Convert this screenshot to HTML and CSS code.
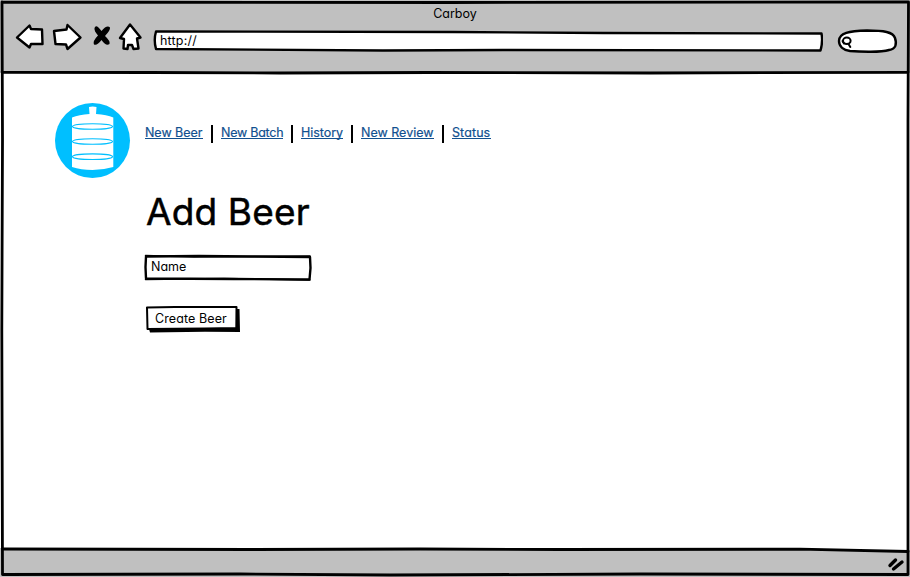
FILE: index.html
```html
<!DOCTYPE html>
<html lang="en">
<head>
<meta charset="utf-8">
<title>Carboy</title>
<link rel="stylesheet" href="styles.css">
</head>
<body>
<div class="window">
  <header class="chrome">
    <div class="title"><span>Carboy</span></div>
    <div class="toolbar">
      <svg class="controls" width="130" height="32" viewBox="14 22 130 32">
        <g class="ink paper">
          <path d="M17 37.5L29.5 25.5L31 29L42 29.5L42.500 44L31 44L29.500 47.500Z"/>
          <path d="M54 31L66.500 29.500L67.500 25L80.500 37.500L67.500 49L66 44.500L55.500 44Z"/>
          <path d="M130 24.500L140.500 37.500L137 38.500L138.500 48.500L133.500 49L132 45L128 45L127.500 49L123.500 48.500L124 39L120 38Z"/>
        </g>
        <path class="solid" d="M94.500 28Q96 23.500 101.500 31Q107 24.500 110 27.500Q110.500 30 105 36Q110.500 41 109.500 44Q106 46.500 101.500 40Q97 46 94 44.500Q92.500 41 98 35.500Q94 31 94.500 28Z"/>
      </svg>
      <div class="address">
        <svg class="sketch" viewBox="0 0 670 22"><path class="ink paper" d="M3 1.500L300 2L450 3L668.500 3.500Q670 12 667.500 20.500L350 20L230 20.500L3 19Q.5 10 3 1.500Z"/></svg>
        <span>http://</span>
      </div>
      <div class="search">
        <svg width="62" height="26" viewBox="836 28 62 26"><path class="ink paper" d="M839 41C839 33 849 31 867 30.500C884 30.500 893 32 895 38C897 44 896 49 889 50C881 52.500 861 52 850 51C843 50 839 46 839 41Z"/><ellipse class="ink thin" cx="846.800" cy="40.800" rx="3.800" ry="3.200"/><path class="ink thin" d="M842.500 41L844 43.500M848.500 44L850.300 47"/></svg>
      </div>
    </div>
  </header>
  <main class="page">
    <svg class="logo" width="76" height="76" viewBox="55 103 76 76">
      <circle class="blue" cx="92.500" cy="140.500" r="37.500"/>
      <path class="white" d="M89 107Q92.500 106 96.500 107L96 114Q107 114.500 113.300 117.500V167Q103 170 92.500 170Q81 170 72 167V117.500Q79 114.500 89.500 114Z"/>
      <g class="rings"><ellipse cx="92.500" cy="126.500" rx="20" ry="2.800"/><ellipse cx="92.500" cy="141.500" rx="20" ry="2.800"/><ellipse cx="92.500" cy="156.700" rx="20" ry="2.800"/></g>
    </svg>
    <div class="content">
      <nav class="nav">
        <a class="beer" href="#">New Beer</a><a class="batch" href="#">New Batch</a><a class="history" href="#">History</a><a class="review" href="#">New Review</a><a class="status" href="#">Status</a>
      </nav>
      <h1>Add Beer</h1>
      <div class="field">
        <svg class="sketch" viewBox="0 0 168 27"><path class="ink" d="M2 2.500L55 2L108 2.500L166 3L166.500 14L165.500 25.500L90 25L2 24.500L1.500 13Z"/><path class="ink fine" d="M1.500 1.500L50 3L166 2M1.500 25.500L80 24.500L166 26"/></svg>
        <span>Name</span>
      </div>
      <div class="button">
        <svg class="sketch" viewBox="0 0 96 28"><path class="solid" d="M4 24L91 23V4H94.500L95 27L60 26.800L5 27.500Z"/><path class="ink thin paper" d="M2 2.500L30 2L91.500 2L91.300 23L60 23.500L2.500 24Z"/></svg>
        <span>Create Beer</span>
      </div>
    </div>
  </main>
  <footer class="statusbar">
    <svg width="20" height="18" viewBox="886 556 20 18"><path class="grip" d="M890 565.500L895.500 560M893.500 569L902 562"/></svg>
  </footer>
  <svg class="frame" viewBox="0 0 910 577">
    <path class="ink heavy" d="M2 2L450 2.500L908.500 2L908 120L908 350L908 574.500L640 574L390 575L240 574L2.500 574.500L1.800 330L2.500 140L2 2"/>
    <path class="ink heavy" d="M2 72.300L150 72.500L280 73L430 72.500L650 73L908 72.300M2 549L250 549.500L420 549L560 549.500L800 549.200L908 551.500"/>
  </svg>
</div>
</body>
</html>
```
FILE: styles.css
```css
* { box-sizing: border-box; }
body {
  margin: 0;
  font: 12.5px/16px Inter, "Liberation Sans", sans-serif;
  font-feature-settings: "cv11";
  color: #000;
  background: #fff;
}
svg { display: block; flex: none; }
.window {
  position: relative;
  display: flex;
  flex-direction: column;
  width: 910px;
  height: 577px;
  overflow: hidden;
}
.chrome { height: 72px; padding-top: 6px; background: #c0c0c0; }
.title { height: 16px; text-align: center; }
.toolbar { display: flex; padding-left: 14px; }
.address {
  position: relative;
  width: 670px;
  height: 22px;
  margin: 8px 0 0 9px;
  padding: 3px 7px;
  letter-spacing: .2px;
}
.address span, .field span, .button span { position: relative; }
.search { margin: 6px 0 0 13px; }
.page { display: flex; flex: 1; padding: 31px 0 0 55px; }
.content { padding: 21px 0 0 14px; }
.nav { display: flex; height: 20px; }
.nav a {
  height: 15px;
  line-height: 17px;
  color: #11508f;
  text-decoration: none;
  white-space: nowrap;
  border-bottom: 1px solid #11508f;
  -webkit-text-stroke: .2px #11508f;
}
.nav a + a { position: relative; margin-left: 18px; }
.nav a + a::before {
  content: "";
  position: absolute;
  left: -10px;
  top: 1px;
  width: 2px;
  height: 18px;
  background: #000;
}
.nav .beer { width: 58px; letter-spacing: -.05px; }
.nav .batch { width: 62px; letter-spacing: -.25px; }
.nav .history { width: 42px; letter-spacing: -.05px; }
.nav .review { width: 73px; }
.nav .status { width: 39px; letter-spacing: .1px; }
h1 {
  margin: 44px 0 0 1px;
  height: 48px;
  font-size: 37px;
  line-height: 48px;
  font-weight: 400;
  letter-spacing: .15px;
  white-space: nowrap;
  -webkit-text-stroke: .5px #000;
}
.field { position: relative; width: 168px; height: 27px; margin: 18px 0 0 -1px; padding: 5px 7px; }
.button { position: relative; width: 96px; height: 28px; margin: 24px 0 0; padding: 6px 10px; white-space: nowrap; letter-spacing: .1px; }
.statusbar { display: flex; justify-content: flex-end; height: 27px; padding: 6px 4px 0 0; background: #c0c0c0; }
.sketch, .frame { position: absolute; inset: 0; width: 100%; height: 100%; }
.frame { pointer-events: none; }
.ink { fill: none; stroke: #000; stroke-width: 2.4; stroke-linejoin: round; stroke-linecap: round; }
.heavy { stroke-width: 2.8; }
.thin { stroke-width: 2; }
.fine { stroke-width: 1.5; }
.paper { fill: #fff; }
.solid { fill: #000; }
.blue { fill: #00bfff; }
.white { fill: #fff; }
.rings { fill: none; stroke: #00bfff; stroke-width: 1.1; }
.grip { fill: none; stroke: #000; stroke-width: 3.4; stroke-linecap: round; }
```
